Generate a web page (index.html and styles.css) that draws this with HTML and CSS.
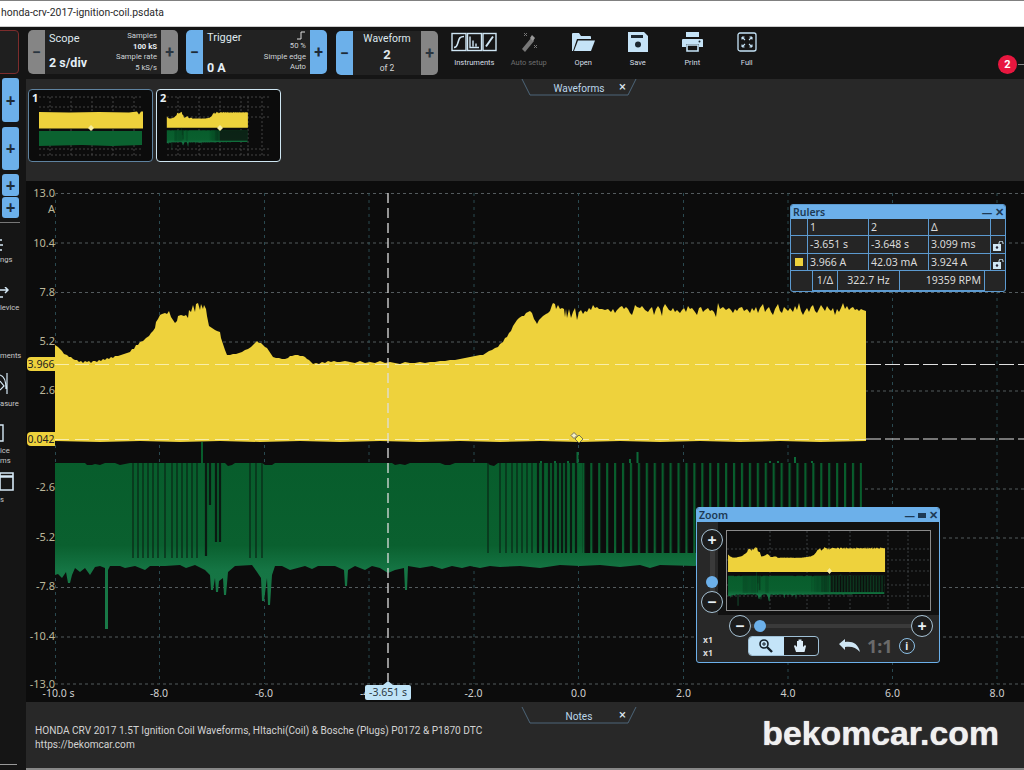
FILE: index.html
```html
<!DOCTYPE html>
<html lang="en">
<head>
<meta charset="utf-8">
<title>honda-crv-2017-ignition-coil.psdata</title>
<link rel="stylesheet" href="styles.css">
</head>
<body>
<div class="app">
  <header class="titlebar">honda-crv-2017-ignition-coil.psdata</header>
  <div class="main">
    <aside class="sidebar">
      <div class="redbox"></div>
      <div class="sideplus tall">+</div>
      <div class="sideplus tall gap">+</div>
      <div class="sideplus short">+</div>
      <div class="sideplus short joined">+</div>
      <div class="sidediv"></div>
      <div class="navitem">
        <div class="navicon"><svg width="3" height="12" viewBox="0 0 3 12"><path d="M0 1h2M0 6h3M0 11h2" stroke="#d5e8f5" stroke-width="1.600" fill="none"/></svg></div>
        <span class="navlabel">ngs</span>
      </div>
      <div class="navitem">
        <div class="navicon"><svg width="9" height="12" viewBox="0 0 9 12"><path d="M0 3h8M5 0l3 3-3 3M0 10h3" stroke="#d5e8f5" stroke-width="1.500" fill="none"/></svg></div>
        <span class="navlabel">levice</span>
      </div>
      <div class="navitem">
        <div class="navicon"></div>
        <span class="navlabel">ments</span>
      </div>
      <div class="navitem">
        <div class="navicon"><svg width="9" height="22" viewBox="0 0 9 22"><path d="M0 2c4 1 6 6 6 14M7 0v21M0 8l4 5-4 4" stroke="#d5e8f5" stroke-width="1.200" fill="none"/></svg></div>
        <span class="navlabel">asure</span>
      </div>
      <div class="navitem">
        <div class="navicon"><svg width="4" height="18" viewBox="0 0 4 18"><path d="M0 1h3v16H0" stroke="#d5e8f5" stroke-width="1.400" fill="none"/></svg></div>
        <span class="navlabel">ice<br>ms</span>
      </div>
      <div class="navitem">
        <div class="navicon"><svg width="14" height="19" viewBox="0 0 14 19"><path d="M0 5h13v13H0zM0 1h13v3H0z" stroke="#d5e8f5" stroke-width="1.600" fill="none"/></svg></div>
        <span class="navlabel">s</span>
      </div>
      <div class="sideend"></div>
    </aside>

    <div class="content">
      <div class="toolbar">
        <div class="ctrl scope">
          <div class="cbtn grey">−</div>
          <div class="cpanel">
            <div class="cleft"><span class="ctitle">Scope</span><span class="cvalue">2 s/div</span></div>
            <div class="cright"><span>Samples</span><b>100 kS</b><span>Sample rate</span><span>5 kS/s</span></div>
          </div>
          <div class="cbtn grey">+</div>
        </div>
        <div class="ctrl trigger">
          <div class="cbtn blue">−</div>
          <div class="cpanel">
            <div class="cleft"><span class="ctitle">Trigger</span><span class="cvalue">0 A</span></div>
            <div class="cright"><svg class="stepicon" width="9" height="9" viewBox="0 0 9 9"><path d="M0 8h4V1h4" stroke="#ddd" fill="none"/></svg><span>50 %</span><span>Simple edge</span><span>Auto</span></div>
          </div>
          <div class="cbtn blue">+</div>
        </div>
        <div class="ctrl waveform">
          <div class="cbtn blue">−</div>
          <div class="cpanel center">
            <span class="ctitle">Waveform</span><b class="wnum">2</b><span class="wof">of 2</span>
          </div>
          <div class="cbtn grey">+</div>
        </div>
        <div class="tools">
          <div class="tool">
            <svg width="46" height="19" viewBox="0 0 46 19"><g fill="none" stroke="#cfe6f4" stroke-width="1.400"><rect x="1" y="1" width="14" height="17"/><rect x="16.500" y="1" width="14" height="17"/><rect x="32" y="1" width="13" height="17"/><path d="M3 15c3 0 3-2 4-5s1-6 6-6" stroke-width="1.600"/><path d="M19 4v11h9M22 14V8M25 14v-3"/><path d="M35 14l7-10" stroke-width="2"/></g></svg>
            <span>Instruments</span>
          </div>
          <div class="tool off">
            <svg width="20" height="20" viewBox="0 0 20 20"><path d="M3 17l9-11 3 3-9 11z" fill="#777"/><path d="M11 6l2-3 3 3-2 3z" fill="#999"/><path d="M5 1l3 3M8 1L5 4M15 13l3 3M18 13l-3 3" stroke="#777" fill="none"/></svg>
            <span>Auto setup</span>
          </div>
          <div class="tool">
            <svg width="25" height="20" viewBox="0 0 25 20"><path d="M1 19V2q0-1 1-1h6l2 3h9q1 0 1 1v2H6L2 19z" fill="#c5e3f7"/><path d="M3 19L7 8.500h17L20 19z" fill="#c5e3f7"/></svg>
            <span>Open</span>
          </div>
          <div class="tool">
            <svg width="20" height="20" viewBox="0 0 20 20"><path d="M0 0h16l4 4v16H0z" fill="#c5e3f7"/><rect x="3" y="3" width="12" height="3" fill="#1c2730"/><circle cx="10" cy="12.500" r="3" fill="#1c2730"/></svg>
            <span>Save</span>
          </div>
          <div class="tool">
            <svg width="21" height="20" viewBox="0 0 21 20"><path d="M4 0h13v5H4z" fill="#c5e3f7"/><path d="M1 7h19q1 0 1 1v7h-4v-3H4v3H0V8q0-1 1-1z" fill="#c5e3f7"/><path d="M5 13h11v6H5z" fill="none" stroke="#c5e3f7" stroke-width="1.600"/><circle cx="17.500" cy="9.500" r="1" fill="#1c2730"/></svg>
            <span>Print</span>
          </div>
          <div class="tool">
            <svg width="20" height="20" viewBox="0 0 20 20"><rect x="1" y="1" width="18" height="18" rx="2" fill="none" stroke="#c5e3f7" stroke-width="1.300"/><path d="M5 5l3 3M5 5h2.500M5 5v2.500M15 5l-3 3M15 5h-2.500M15 5v2.500M5 15l3-3M5 15h2.500M5 15v-2.500M15 15l-3-3M15 15h-2.500M15 15v-2.500" stroke="#c5e3f7" fill="none" stroke-width="1.100"/></svg>
            <span>Full</span>
          </div>
        </div>
        <div class="badgewrap"><span class="badge">2</span><span class="badgeline"></span></div>
      </div>

      <section class="thumbs">
        <div class="tab">
          <svg class="tabshape" width="116" height="18" viewBox="0 0 116 18"><path d="M1 0l8 16h98l8-16" fill="none" stroke="#4c6578" stroke-width="1"/></svg>
          <span class="tabtext">Waveforms</span><span class="tabx">×</span>
        </div>
        <div class="thumbrow">
          <div class="thumb">
            <svg width="125" height="73" viewBox="0 0 125 73">
              <path class="tgrid" d="M11 8h103M11 18h103M11 28h103M11 60h103M11 66h103M22 8v58M43 8v58M64 8v58M85 8v58M106 8v58"/>
              <path d="M11 23l30 .5 30-.5 30 .5 8-1 2 3 2-3 2 0v17H11z" fill="#eed23c"/>
              <path d="M11 42h103v14l-30 1-30-1-43 1z" fill="#0b6230"/>
              <path d="M60 39l3-3 3 3-3 3z" fill="#f7eda0"/>
            </svg>
            <span class="thumbnum">1</span>
          </div>
          <div class="thumb active">
            <svg width="125" height="73" viewBox="0 0 125 73">
              <path class="tgrid" d="M11 8h103M11 18h103M11 28h103M11 60h103M11 66h103M22 8v58M43 8v58M64 8v58M85 8v58M106 8v58M92 8v58"/>
              <use href="#trace" transform="translate(5.300,-12.500) scale(.1,.116)"/>
              <path d="M61 39l3-3 3 3-3 3z" fill="#f7eda0"/>
            </svg>
            <span class="thumbnum">2</span>
          </div>
        </div>
      </section>

      <section class="chart">
        <svg class="plot" width="998" height="521" viewBox="26 181 998 521">
          <defs>
            <linearGradient id="greenfill" x1="0" y1="442" x2="0" y2="630" gradientUnits="userSpaceOnUse">
              <stop offset="0" stop-color="#075c2b"/>
              <stop offset=".55" stop-color="#0a602f"/>
              <stop offset=".68" stop-color="#157544"/>
              <stop offset="1" stop-color="#1a7a48"/>
            </linearGradient>
            <pattern id="gaps" x="582.300" y="0" width="7.930" height="200" patternUnits="userSpaceOnUse">
              <rect x="2.200" y="0" width="5.730" height="200" fill="#0c0c0c"/>
            </pattern>
          </defs>
          <path class="hgrid" d="M55 193.500H1024M55 243H1024M55 292.500H1024M55 342H1024M55 391H1024M55 489H1024M55 538H1024M55 587.500H1024M55 637H1024M55 684H1024"/>
          <path class="vgrid" d="M55.500 193V684M159.500 193V684M264.500 193V684M369 193V684M474 193V684M578.500 193V684M683.500 193V684M788 193V684M892.500 193V684M997 193V684"/>
          <g id="trace">
            <polygon fill="#eed23c" points="55,441 55,345 58,347 60,349 62,351 64,354 67,355 69,357 71,357 73,359 75,360 77,360 79,362 81,361 83,363 85,361 87,362 89,361 91,363 93,361 95,361 97,362 99,360 101,361 103,359 105,360 107,358 109,359 111,357 113,358 115,356 118,356 121,355 124,354 127,353 130,352 132,349 134,349 136,345 138,345 140,342 143,341 146,338 149,336 151,333 153,331 155,328 156,322 158,319 160,315 162,314 165,313 167,314 169,311 171,317 173,320 175,323 177,321 178,316 181,315 184,316 186,315 188,318 189,310 191,312 193,305 195,312 196,304 198,303 200,310 201,304 203,309 204,305 206,309 207,316 209,326 212,328 215,330 217,331 220,332 221,338 223,344 225,350 227,355 230,355 233,354 236,354 239,353 242,352 245,350 248,349 251,347 253,345 255,343 257,341 259,343 261,343 263,345 265,347 267,348 269,351 271,354 273,357 276,358 279,358 282,359 285,359 288,358 290,356 292,356 295,355 298,355 300,356 303,356 305,357 307,359 309,360 311,362 313,364 316,363 319,364 322,362 325,363 328,361 331,362 334,361 337,362 340,362 345,361 350,362 355,363 360,361 365,363 370,362 375,363 380,361 385,363 390,362 395,363 400,364 405,362 410,363 415,363 420,362 425,363 430,362 435,362 440,361 445,361 450,360 455,360 460,359 465,358 470,357 475,356 480,355 483,355 486,353 489,351 492,350 495,348 498,347 500,344 503,342 505,338 507,337 509,333 511,331 513,326 515,323 517,320 519,318 522,316 524,316 526,313 528,312 530,311 532,313 534,319 536,322 537,324 539,320 541,318 543,316 546,314 548,313 550,311 552,305 553,303 555,304 556,309 558,305 560,309 562,308 564,309 565,317 566,309 567,318 569,309 571,318 573,312 575,308 577,320 579,312 581,310 583,314 585,311 587,312 589,308 591,310 593,305 595,308 597,307 599,309 602,309 605,310 608,309 611,312 613,309 615,313 617,310 620,307 622,306 624,309 626,307 628,309 630,313 632,315 634,309 635,305 637,307 640,308 642,306 645,310 648,312 650,309 652,307 654,315 656,309 658,306 660,309 662,316 663,308 665,304 667,307 669,310 671,311 673,308 675,312 677,310 680,313 682,310 684,308 686,312 688,306 690,309 692,308 695,312 697,315 699,308 701,307 703,312 705,310 708,308 710,311 712,310 714,312 716,317 718,303 720,309 723,307 726,310 729,308 731,310 733,313 735,309 737,311 739,308 742,307 744,311 747,309 750,313 752,308 754,311 756,307 758,313 760,308 763,304 765,312 767,309 769,307 771,312 773,315 775,309 778,304 780,311 782,313 784,307 786,309 788,311 790,308 793,312 795,306 797,310 799,303 801,311 803,315 805,311 807,308 809,312 811,307 813,305 815,311 817,313 819,309 821,305 823,308 825,311 827,306 829,309 831,311 833,308 835,315 837,309 839,312 841,308 843,303 845,309 847,306 849,310 851,308 853,307 855,310 857,309 859,311 861,309 863,310 866,311 866,441 820,442 780,441 740,442 700,441 660,442 620,441 580,442 540,441 500,442 460,441 420,442 380,441 340,442 300,441 260,442 220,441 180,442 140,441 100,442"/>
            <polygon fill="url(#greenfill)" points="55,463 85,463 87,465 92,465 95,464 100,465 105,463 115,463 120,465 125,464 130,463 201,463 201,442 203,442 203,463 225,463 228,466 232,465 235,463 262,463 265,465 272,465 275,463 392,463 395,465 400,464 405,465 410,463 440,463 445,465 450,465 455,463 487,463 490,465 494,466 498,463 862,463 862,564 700,564 695,566 660,565 650,568 640,565 620,567 600,565 580,566 560,565 540,568 520,566 500,567 490,566 480,568 470,566 462,568 452,566 442,569 432,566 420,568 408,566 407,590 405,590 404,568 395,570 388,573 380,568 372,566 365,570 355,566 348,570 347,586 345,586 344,570 335,566 318,566 312,569 305,566 290,570 282,566 275,566 272,575 270,605 268,605 267,578 264,601 262,601 261,578 257,572 252,565 235,566 228,572 226,595 224,595 223,578 219,581 218,592 216,592 215,578 213,590 211,590 210,575 205,570 195,565 186,568 180,565 165,566 155,566 150,566 145,570 135,566 125,568 120,566 110,566 108,570 108,629 105,629 105,568 100,566 95,567 90,575 85,568 80,572 75,568 72,575 70,583 68,583 66,572 62,578 58,574 55,575"/>
            <rect x="582.300" y="463" width="280" height="90" fill="url(#gaps)"/>
            <path class="gaps1" d="M133 463V558M138 463V558M143 463V558M148 463V558M153 463V558M158 463V558M165 463V558M172 463V558M177 463V558M182 463V558M187 463V558M192 463V558M197 463V558M250 463V558M256 463V558M262 463V558M488 463V553M500 463V553M506 463V553M512 463V553M517 463V553M522 463V553M527 463V553M532 463V553"/>
            <path class="gaps2" d="M210 463V505M206 463V556M216 463V542M220 463V542M538 463V553M543 463V553M549 463V553M553 463V553M558 463V553M562 463V553M566 463V553M571 463V553M576 463V553"/>
            <path class="tallbars" d="M577.500 452V463M637.500 452V463M630 459V463M541 461V463M555 461V463M568 461V463M795 457V463M770 461V463M778 461V463M812 461V463"/>
          </g>
          <path class="ruleron" d="M55 364.500H866M55 439.500H866"/>
          <path class="ruleroff" d="M866 364.500H1024M866 439H1024"/>
          <path class="rulerv" d="M388 193V681"/>
          <path d="M571 435.500l3-3 3 3-3 3z" fill="#f4efc8" stroke="#555" stroke-width=".8"/>
          <path d="M575 439l4-4 4 4-4 4z" fill="#fff24a" stroke="#555" stroke-width=".8"/>
          <g class="ylabels">
            <text x="55" y="197">13.0</text><text x="55" y="213">A</text><text x="55" y="247">10.4</text><text x="55" y="296">7.8</text><text x="55" y="345">5.2</text><text x="55" y="394">2.6</text><text x="55" y="491">-2.6</text><text x="55" y="541">-5.2</text><text x="55" y="590">-7.8</text><text x="55" y="640">-10.4</text><text x="55" y="688">-13.0</text>
          </g>
          <g class="xlabels">
            <text x="58.500" y="697">-10.0 s</text><text x="159" y="697">-8.0</text><text x="264" y="697">-6.0</text><text x="369" y="697">-4.0</text><text x="473.500" y="697">-2.0</text><text x="578.500" y="697">0.0</text><text x="683.500" y="697">2.0</text><text x="788" y="697">4.0</text><text x="892.500" y="697">6.0</text><text x="997" y="697">8.0</text>
          </g>
        </svg>
        <span class="ytag tag1">3.966</span>
        <span class="ytag tag2">0.042</span>
        <span class="timetag">-3.651 s</span>

        <div class="rulers">
          <div class="wintitle"><span>Rulers</span><span class="winbtns">— ✕</span></div>
          <div class="rgrid">
            <div></div><div>1</div><div>2</div><div>Δ</div><div></div>
            <div></div><div>-3.651 s</div><div>-3.648 s</div><div>3.099 ms</div><div class="lockcell"><svg width="11" height="10" viewBox="0 0 11 10"><rect x="0" y="3" width="8" height="7" fill="#cfe6f4"/><circle cx="4" cy="6.500" r="1.200" fill="#223"/><path d="M6 3V2a2 2 0 0 1 4 0v1" stroke="#cfe6f4" fill="none"/></svg></div>
            <div class="swatchcell"><span class="swatch"></span></div><div>3.966 A</div><div>42.03 mA</div><div>3.924 A</div><div class="lockcell"><svg width="11" height="10" viewBox="0 0 11 10"><rect x="0" y="3" width="8" height="7" fill="#cfe6f4"/><circle cx="4" cy="6.500" r="1.200" fill="#223"/><path d="M6 3V2a2 2 0 0 1 4 0v1" stroke="#cfe6f4" fill="none"/></svg></div>
            <div class="rfoot"><span class="rf1">1/Δ</span><span class="rf2">322.7 Hz</span><span class="rf3">19359 RPM</span></div>
          </div>
        </div>

        <div class="zoomwin">
          <div class="wintitle"><span>Zoom</span><span class="winbtns">— <i class="maxbtn"></i> ✕</span></div>
          <div class="zoomtop">
            <div class="vslider">
              <span class="round">+</span>
              <span class="vtrack"><i class="knob"></i></span>
              <span class="round">−</span>
            </div>
            <div class="zoomplotwrap">
              <svg class="zoomplot" width="203" height="79" viewBox="727 530 203 79">
                <path class="zgrid" d="M727 548H930M727 559H930M727 570H930M727 584H930M727 595H930M770 530V609M807 530V609M829 530V609M850 530V609M888 530V609M908 530V609"/>
                <use href="#trace" transform="translate(717.400,491.500) scale(.1936,.18)"/>
                <path d="M827 570l2.500-3 2.500 3-2.500 3z" fill="#f7eda0"/>
              </svg>
            </div>
          </div>
          <div class="hslider">
            <span class="round">−</span>
            <span class="htrack"><i class="knob hknob"></i></span>
            <span class="round">+</span>
          </div>
          <div class="zoombottom">
            <div class="xones"><span>x1</span><span>x1</span></div>
            <div class="segment">
              <span class="seg on"><svg width="16" height="16" viewBox="0 0 16 16"><circle cx="6" cy="6" r="4" fill="none" stroke="#14202a" stroke-width="1.600"/><path d="M9 9l5 5" stroke="#14202a" stroke-width="2.400"/><path d="M4 6h4M6 4v4" stroke="#14202a"/></svg></span>
              <span class="seg"><svg width="15" height="16" viewBox="0 0 15 16"><path d="M3 14L1 8l1-1 2 2V3h1.500v4V1.500H7V7V1.500h1.500V7V3H10v6l2-2 1 1-1.500 6z" fill="#dcedf8"/></svg></span>
            </div>
            <svg class="undo" width="23" height="14" viewBox="0 0 23 14"><path d="M1 5l6-5v3c7-1 13 1 15 10-4-5-9-6-15-5v3z" fill="#cfe6f4"/></svg>
            <span class="oneone">1:1</span>
            <span class="info">i</span>
          </div>
        </div>
      </section>

      <section class="notes">
        <div class="tab">
          <svg class="tabshape" width="116" height="18" viewBox="0 0 116 18"><path d="M1 0l8 16h98l8-16" fill="none" stroke="#4c6578" stroke-width="1"/></svg>
          <span class="tabtext">Notes</span><span class="tabx">×</span>
        </div>
        <div class="notesrow">
          <p class="notetext">HONDA CRV 2017 1.5T Ignition Coil Waveforms, HItachi(Coil) &amp; Bosche (Plugs) P0172 &amp; P1870 DTC<br>https://bekomcar.com</p>
          <span class="watermark">bekomcar.com</span>
        </div>
      </section>
    </div>
  </div>
</div>
</body>
</html>
```
FILE: styles.css
```css
* { box-sizing: border-box; }
html, body { margin: 0; padding: 0; background: #888; }
body { font-family: "Noto Sans", "Open Sans", sans-serif; width: 1024px; height: 770px; overflow: hidden; }
.app { display: flex; flex-direction: column; width: 1024px; height: 770px; overflow: hidden; }

.titlebar { height: 27px; flex: none; background: #fff; border-top: 1px solid #808080; border-bottom: 1px solid #ccc; font-family: Roboto, sans-serif; font-size: 10.400px; line-height: 24px; color: #2a2a2a; padding-left: 1px; }
.main { flex: 1; display: flex; min-height: 0; }

.sidebar { width: 26px; flex: none; background: #151515; display: flex; flex-direction: column; overflow: hidden; padding-top: 3px; }
.redbox { width: 25px; height: 44px; margin-left: -6px; border: 1px solid #7c2c2c; border-radius: 4px; background: #1f1f1f; flex: none; }
.sideplus { width: 17px; margin-left: 2px; background: #6cb0ea; color: #1d2b38; font-size: 17px; line-height: 1; font-weight: 700; display: flex; align-items: center; justify-content: center; flex: none; border-radius: 3px; }
.sideplus.tall { height: 44px; margin-top: 4px; }
.sideplus.gap { margin-top: 5px; height: 43px; }
.sideplus.short { height: 22px; margin-top: 4px; }
.sideplus.joined { margin-top: 1px; height: 21px; }
.sidediv { height: 1px; width: 20px; margin-top: 4px; margin-bottom: 3px; background: #777; flex: none; }
.navitem { height: 48px; flex: none; display: flex; flex-direction: column; }
.navicon { height: 29px; display: flex; align-items: flex-end; justify-content: flex-start; padding-bottom: 4px; }
.navicon svg { display: block; }
.navlabel { font-family: Roboto, sans-serif; font-size: 7.600px; line-height: 10px; color: #c8c8c8; white-space: nowrap; }
.sideend { margin-top: auto; margin-bottom: 5px; height: 1px; width: 17px; background: #999; flex: none; }

.content { flex: 1; min-width: 0; display: flex; flex-direction: column; }

.toolbar { height: 52px; flex: none; background: #151515; display: flex; align-items: flex-start; padding: 3px 0 0 2px; font-family: Roboto, sans-serif; }
.ctrl { display: flex; height: 44px; flex: none; color: #dfe8ee; }
.scope { width: 150px; }
.trigger { width: 141px; margin-left: 8px; }
.waveform { width: 102px; margin-left: 9px; margin-top: 1px; }
.cbtn { width: 17px; flex: none; display: flex; align-items: center; justify-content: center; font-size: 16px; font-weight: 700; color: #2a3540; }
.cbtn:first-child { border-radius: 5px 0 0 5px; }
.cbtn:last-child { border-radius: 0 5px 5px 0; }
.cbtn.grey { background: #858585; }
.cbtn.blue { background: #6cb0ea; color: #1d2b38; }
.cpanel { flex: 1; background: #222; display: flex; justify-content: space-between; padding: 0 4px; min-width: 0; }
.cpanel.center { flex-direction: column; align-items: center; justify-content: flex-start; padding: 0; }
.cleft { display: flex; flex-direction: column; justify-content: space-between; padding: 1px 0 3px; }
.trigger .cleft { padding: 0 0 0; }
.ctitle { font-size: 11px; line-height: 15px; color: #dfe8ee; }
.waveform .ctitle { font-size: 10.400px; line-height: 16px; }
.cvalue { font-size: 12.500px; line-height: 17px; font-weight: 700; color: #e4eef6; }
.trigger .cvalue { margin-bottom: -2px; }
.cright { display: flex; flex-direction: column; align-items: flex-end; justify-content: center; font-size: 7.700px; line-height: 10.500px; color: #cfd4d8; white-space: nowrap; }
.cright b { color: #e8eef2; font-weight: 700; }
.stepicon { display: block; margin-bottom: 1px; }
.wnum { font-size: 13px; line-height: 15px; }
.wof { font-size: 8.500px; line-height: 13px; color: #d5d5d5; }
.tools { display: flex; margin-left: 9px; flex: none; }
.tool { width: 54.500px; flex: none; display: flex; flex-direction: column; align-items: center; color: #d5dfe6; font-size: 7.500px; line-height: 12px; }
.tool svg { display: block; height: 20px; margin-top: 2px; margin-bottom: 5px; }
.tool.off { color: #6d6d6d; }
.badgewrap { margin-left: auto; align-self: flex-end; display: flex; align-items: center; margin-bottom: 5px; }
.badge { width: 19px; height: 19px; border-radius: 50%; background: #e8173f; color: #fff; font-size: 11px; font-weight: 700; display: flex; align-items: center; justify-content: center; }
.badgeline { width: 6px; height: 1px; margin-left: 1px; background: #888; }

.thumbs { height: 102px; flex: none; background: #282828; position: relative; }
.tab { position: absolute; top: 0; left: 495px; width: 116px; height: 18px; color: #bcd6ea; font-family: Roboto, sans-serif; font-size: 10.100px; line-height: 19px; }
.tabshape { position: absolute; left: 0; top: 0; }
.tabtext { position: absolute; left: 0; right: 0; text-align: center; }
.tabx { position: absolute; right: 11px; top: 0; color: #dfe8ee; font-size: 13px; line-height: 16px; }
.thumbrow { display: flex; gap: 3px; padding: 10px 0 0 2px; }
.thumb { width: 125px; height: 73px; position: relative; background: #0c0c0c; border: 1.500px solid #5f83a0; border-radius: 4px; overflow: hidden; }
.thumb.active { border-color: #cfe6f2; }
.thumb svg { display: block; margin: -1.500px; }
.thumbnum { position: absolute; left: 3px; top: 1px; font-size: 11px; line-height: 14px; font-weight: 700; color: #e8f0f5; }
.tgrid { fill: none; stroke: #505050; stroke-width: .8; stroke-dasharray: 2 2; }

.chart { height: 521px; flex: none; position: relative; background: #0c0c0c; }
.plot { display: block; }
.hgrid { fill: none; stroke: #5c6468; stroke-width: .9; stroke-dasharray: 3 3; }
.vgrid { fill: none; stroke: #2e5058; stroke-width: .9; stroke-dasharray: 3 4; }
.gaps1 { fill: none; stroke: #0a2a18; stroke-width: 1.300; }
.gaps2 { fill: none; stroke: #0a1a12; stroke-width: 2.200; }
.tallbars { fill: none; stroke: #0c6a38; stroke-width: 2; }
.ruleron { fill: none; stroke: #f8eea8; stroke-width: 1; stroke-dasharray: 14 6; }
.ruleroff { fill: none; stroke: #e0e0e0; stroke-width: 1.200; stroke-dasharray: 15 4; }
.rulerv { fill: none; stroke: #dedede; stroke-width: 1.300; stroke-dasharray: 10 5; }
.ylabels text { font-size: 11px; fill: #bcb89a; text-anchor: end; }
.xlabels text { font-size: 10.500px; fill: #cfcfcf; text-anchor: middle; }
.ytag { position: absolute; left: 1px; width: 28px; height: 14px; background: #eed23c; border-radius: 4px 0 0 4px; color: #222; font-size: 10.500px; line-height: 14px; text-align: center; }
.tag1 { top: 176px; }
.tag2 { top: 251px; }
.timetag { position: absolute; left: 339px; top: 504px; width: 46px; height: 15px; background: #bfe3f7; border-radius: 2px; color: #2c3a44; font-size: 10.500px; line-height: 15px; text-align: center; }
.timetag::before { content: ""; position: absolute; left: 18px; top: -4px; border-left: 5px solid transparent; border-right: 5px solid transparent; border-bottom: 4px solid #bfe3f7; }

.wintitle { background: #6cb0ea; color: #1d3a55; display: flex; justify-content: space-between; align-items: center; font-size: 10.500px; font-weight: 600; line-height: 14px; height: 14px; padding: 0 1px 0 2px; flex: none; }
.winbtns { font-size: 10.500px; font-weight: 700; display: flex; align-items: center; gap: 3px; }
.maxbtn { display: inline-block; width: 8px; height: 5px; background: #1d3a55; }

.rulers { position: absolute; left: 764px; top: 23px; width: 216px; height: 88px; background: #252525; border: 1px solid #5c9ad0; border-radius: 3px; overflow: hidden; display: flex; flex-direction: column; }
.rgrid { display: grid; grid-template-columns: 17px 61px 60px 62px 14px; grid-template-rows: 17px 18px 17px 20px; color: #dadada; font-size: 10.500px; line-height: 16px; }
.rgrid > div { border-right: 1px solid #5c9ad0; border-bottom: 1px solid #5c9ad0; padding-left: 2px; white-space: nowrap; }
.rgrid > .lockcell { border-right: 0; padding: 3px 0 0 2px; }
.rgrid > div:nth-child(5) { border-right: 0; }
.swatchcell { display: flex; align-items: center; }
.swatch { display: block; width: 8px; height: 8px; background: #eed23c; margin-left: 2px; }
.rgrid > .rfoot { grid-column: 1 / -1; border: 0; padding: 0 0 0 21px; display: flex; }
.rfoot span { height: 20px; border-left: 1px solid #5c9ad0; border-bottom: 1px solid #5c9ad0; line-height: 19px; display: block; }
.rf1 { width: 25px; text-align: center; }
.rf2 { width: 62px; text-align: center; }
.rf3 { width: 86px; text-align: right; padding-right: 3px; border-right: 1px solid #5c9ad0; }

.zoomwin { position: absolute; left: 670px; top: 326px; width: 244px; height: 156px; background: #282828; border: 1px solid #6cb0ea; border-radius: 3px; overflow: hidden; display: flex; flex-direction: column; color: #d8d8d8; }
.zoomtop { display: flex; height: 93px; flex: none; }
.vslider { width: 30px; margin-right: -9px; flex: none; position: relative; z-index: 1; display: flex; flex-direction: column; align-items: center; justify-content: flex-end; padding-bottom: 2px; }
.round { width: 22px; height: 22px; flex: none; border-radius: 50%; border: 1px solid #a8c4d6; background: #1c1c1c; color: #e8f0f5; font-size: 16px; font-weight: 700; display: flex; align-items: center; justify-content: center; line-height: 1; }
.vtrack { width: 5px; height: 40px; background: #3a3a3a; position: relative; display: block; }
.knob { position: absolute; width: 12px; height: 12px; border-radius: 50%; background: #6cb0ea; left: -3.500px; bottom: 3px; display: block; }
.zoomplotwrap { flex: 1; background: #111; padding: 9px 8px 5px 9px; min-width: 0; }
.zoomplot { display: block; outline: 1px solid #8a8a8a; background: #0c0c0c; }
.zgrid { fill: none; stroke: #4e5458; stroke-width: .7; stroke-dasharray: 2 2; }
.hslider { display: flex; align-items: center; height: 22px; padding: 0 6px 0 32px; flex: none; }
.htrack { flex: 1; height: 4px; background: #3a3a3a; position: relative; display: block; }
.hknob { left: 3px; bottom: -4px; }
.zoombottom { display: flex; align-items: center; height: 24px; flex: none; margin-top: -3px; padding-left: 6px; }
.xones { width: 45px; flex: none; display: flex; flex-direction: column; font-size: 8.500px; font-weight: 700; line-height: 13px; }
.segment { display: flex; width: 71px; height: 20px; border: 1px solid #9fc0d6; border-radius: 4px; overflow: hidden; flex: none; background: #1d1d1d; }
.seg { flex: 1; display: flex; align-items: center; justify-content: center; }
.seg.on { background: #c4e4f8; }
.undo { display: block; margin-left: 19px; flex: none; }
.oneone { margin-left: 6px; font-size: 18px; font-weight: 700; color: #6a6a6a; line-height: 20px; }
.info { margin-left: 6px; width: 16px; height: 16px; flex: none; border-radius: 50%; border: 1.500px solid #8cc0e6; color: #e8f0f5; font-size: 10px; font-weight: 700; display: flex; align-items: center; justify-content: center; }

.notes { flex: 1; background: #282828; position: relative; min-height: 0; border-bottom: 2px solid #888; }
.notes .tab { top: 5px; }
.notesrow { display: flex; justify-content: space-between; align-items: flex-start; padding: 22px 25px 0 9px; }
.notetext { margin: 0; font-family: Roboto, sans-serif; font-size: 10.120px; line-height: 14px; color: #d2d2d2; white-space: nowrap; }
.watermark { font-family: "Liberation Sans", Arial, sans-serif; font-weight: 700; font-size: 33.800px; line-height: 36px; margin-top: -9px; color: #f0f0f0; text-shadow: 0 0 1px #f0f0f0; }
```
